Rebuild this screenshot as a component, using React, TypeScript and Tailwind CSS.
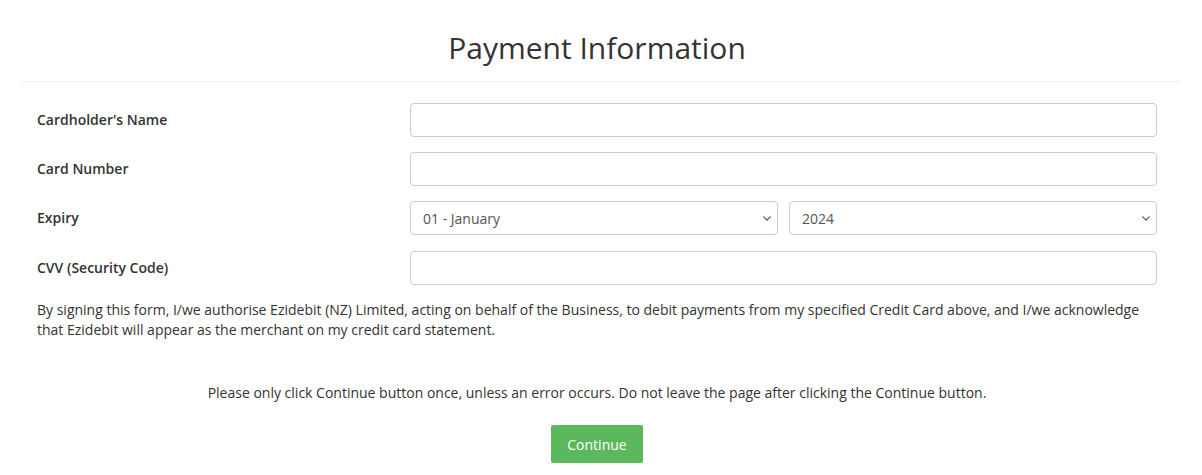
import React from "react";

function Chevron() {
  return (
    <svg width="8" height="5" viewBox="0 0 8 5" className="absolute right-[7px] top-[15px] pointer-events-none" fill="none" stroke="#555" strokeWidth="1.2" strokeLinecap="round" strokeLinejoin="round">
      <path d="M0.8 0.8L4 4.1 7.2 0.8" />
    </svg>
  );
}

function Row({ label, children, mb = "mb-[15px]" }: { label: string; children: React.ReactNode; mb?: string }) {
  return (
    <div className={"flex items-center h-[34px] " + mb}>
      <label className="w-[388px] shrink-0 pl-[15px] pb-[2px] font-semibold text-[14px] text-[#333]">{label}</label>
      <div className="flex-1 flex gap-[11px]">{children}</div>
    </div>
  );
}

export default function App() {
  const input = "w-full h-[34px] border border-[#ccc] rounded-[4px] bg-white px-[12px] text-[14px] text-[#555] outline-none";
  return (
    <div className="bg-white w-[1202px] h-[475px] px-[22px] text-[#333]" style={{ fontFamily: '"Open Sans", sans-serif' }}>
      <div className="border-b border-[#eee] pt-[29px] pb-[14px] pr-[8px] text-center">
        <h1 className="text-[30px] leading-[38px] font-normal text-[#333]">Payment Information</h1>
      </div>
      <div className="pt-[21px] pr-[23px]">
        <Row label="Cardholder's Name">
          <input className={input} />
        </Row>
        <Row label="Card Number">
          <input className={input} />
        </Row>
        <Row label="Expiry" mb="mb-[16px]">
          <div className="relative flex-1">
            <div className={input + " flex items-center"}>01 - January</div>
            <Chevron />
          </div>
          <div className="relative flex-1">
            <div className={input + " flex items-center"}>2024</div>
            <Chevron />
          </div>
        </Row>
        <Row label="CVV (Security Code)">
          <input className={input} />
        </Row>
        <p className="pl-[15px] text-[14px] leading-[19.5px] text-[#333] mt-[1px]">
          By signing this form, I/we authorise Ezidebit (NZ) Limited, acting on behalf of the Business, to debit payments from my specified Credit Card above, and I/we acknowledge that Ezidebit will appear as the merchant on my credit card statement.
        </p>
        <p className="mt-[44px] text-center text-[14px] leading-[20px] text-[#333] pl-[15px]">
          Please only click Continue button once, unless an error occurs. Do not leave the page after clicking the Continue button.
        </p>
        <div className="flex justify-center mt-[22px] pl-[15px]">
          <button className="bg-[#5cb85c] text-white text-[14px] h-[38px] w-[92px] rounded-[2px]">Continue</button>
        </div>
      </div>
    </div>
  );
}
